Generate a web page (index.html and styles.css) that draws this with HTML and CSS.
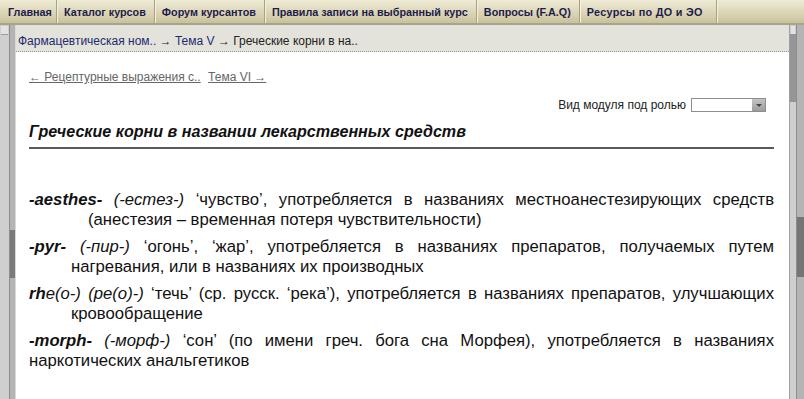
FILE: index.html
```html
<!DOCTYPE html>
<html lang="ru">
<head>
    <meta charset="UTF-8">
    <title>Греческие корни в названии лекарственных средств</title>
    <link rel="stylesheet" href="styles.css">
</head>
<body>
    <div class="topnav">
        <a class="tab" href="#">Главная</a>
        <a class="tab" href="#">Каталог курсов</a>
        <a class="tab" href="#">Форум курсантов</a>
        <a class="tab" href="#">Правила записи на выбранный курс</a>
        <a class="tab" href="#">Вопросы (F.A.Q)</a>
        <a class="tab" href="#">Ресурсы по ДО и ЭО</a>
    </div>

    <div class="frame">
        <div class="rail-left">
            <div class="track">
                <div class="arrow-up"></div>
            </div>
            <div class="track-dark">
                <div class="thumb-left"></div>
            </div>
        </div>

        <div class="main">
            <div class="breadcrumb">
                <a href="#">Фармацевтическая ном..</a> &rarr; <a href="#">Тема V</a> &rarr; Греческие корни в на..
            </div>

            <div class="content">
                <div class="pager">
                    <a href="#">&larr; Рецептурные выражения с..</a>
                    <a href="#">Тема VI &rarr;</a>
                </div>

                <div class="role-view">
                    Вид модуля под ролью
                    <span class="select"><span class="select-btn"></span></span>
                </div>

                <h2 class="title">Греческие корни в названии лекарственных средств</h2>

                <div class="text">
                    <p>
                        <span class="first"><b>-aesthes-</b> <i>(-естез-)</i> ‘чувство’, употребляется в названиях местноанестезирующих средств</span>
                        <span class="rest indent-wide">(анестезия – временная потеря чувствительности)</span>
                    </p>
                    <p>
                        <span class="first"><b>-pyr-</b> <i>(-пир-)</i> ‘огонь’, ‘жар’, употребляется в названиях препаратов, получаемых путем</span>
                        <span class="rest indent">нагревания, или в названиях их производных</span>
                    </p>
                    <p>
                        <span class="first"><b>rh</b><i>e(o-)</i> <i>(pe(o)-)</i> ‘течь’ (ср. русск. ‘река’), употребляется в названиях препаратов, улучшающих</span>
                        <span class="rest indent">кровообращение</span>
                    </p>
                    <p>
                        <span class="first"><b>-morph-</b> <i>(-морф-)</i> ‘сон’ (по имени греч. бога сна Морфея), употребляется в названиях</span>
                        <span class="rest">наркотических анальгетиков</span>
                    </p>
                </div>
            </div>
        </div>

        <div class="rail-right">
            <div class="track">
                <div class="arrow-up"></div>
                <div class="thumb-inner"></div>
            </div>
            <div class="track-dark">
                <div class="thumb-right"></div>
            </div>
        </div>
    </div>
</body>
</html>
```

FILE: styles.css
```css
html, body {
    margin: 0;
    padding: 0;
    height: 100%;
    overflow: hidden;
}

body {
    font-family: "Liberation Sans", Arial, sans-serif;
    background-color: #ffffff;
    display: flex;
    flex-direction: column;
}

.topnav {
    display: flex;
    height: 23px;
    background: linear-gradient(#efebd6, #d6cfae 70%, #c9c19b);
    border-bottom: 2px solid #a8a48c;
    flex-shrink: 0;
}

.tab {
    display: flex;
    align-items: center;
    padding: 0 8px 0 7px;
    font-size: 10.8px;
    font-weight: bold;
    color: #1c1c4c;
    text-decoration: none;
    border-right: 1px solid #a9a184;
    box-shadow: 1px 0 0 #f4f0e0;
}

.tab:first-child {
    padding-left: 8px;
    padding-right: 4px;
}

.tab:last-child {
    padding-right: 13px;
    letter-spacing: 0.3px;
}

.frame {
    flex: 1;
    display: flex;
    min-height: 0;
}

/* scrollbars of the frames */
.rail-left, .rail-right {
    display: flex;
    flex-shrink: 0;
}

.track {
    width: 9px;
    background-color: #cfcfcf;
    border-right: 1px solid #8c8c8c;
}

.track-dark {
    width: 5px;
    background-color: #b4b4b4;
    border-right: 1px solid #d8d8d8;
}

.rail-right .track {
    width: 6px;
    border-left: 1px solid #a0a0a0;
    border-right: 1px solid #8c8c8c;
}

.rail-right .track-dark {
    width: 7px;
    border-right: none;
}

.arrow-up {
    height: 8px;
    margin: 1px 1px 0 1px;
    background-color: #e2e2e2;
    border-bottom: 1px solid #9c9c9c;
}

.thumb-left {
    height: 48px;
    margin-top: 205px;
    background-color: #7a7a7a;
}

.thumb-inner {
    height: 68px;
    margin-top: -1px;
    background-color: #959595;
}

.thumb-right {
    height: 60px;
    margin-top: 192px;
    background-color: #757575;
}

.main {
    flex: 1;
    display: flex;
    flex-direction: column;
    min-width: 0;
}

.breadcrumb {
    height: 20px;
    padding-top: 6px;
    line-height: 20px;
    padding-left: 2px;
    font-size: 12px;
    color: #222222;
    background-color: #e3e3dc;
    border-bottom: 1px dotted #9a9a9a;
}

.breadcrumb a {
    color: #1f2a6e;
    text-decoration: none;
}

.content {
    flex: 1;
    padding: 0 15px 0 13px;
}

.pager {
    margin-top: 18px;
    font-size: 12px;
}

.pager a {
    color: #666666;
    margin-right: 4px;
}

.role-view {
    margin-top: 14px;
    display: flex;
    justify-content: flex-end;
    align-items: center;
    gap: 5px;
    font-size: 12px;
    color: #222222;
    margin-right: 8px;
}

.select {
    width: 73px;
    height: 12px;
    border: 1px solid #8e8e8e;
    background-color: #ffffff;
    display: flex;
    justify-content: flex-end;
}

.select-btn {
    width: 13px;
    background: linear-gradient(#c4c4c4, #9c9c9c);
    position: relative;
}

.select-btn::after {
    content: "";
    position: absolute;
    left: 4px;
    top: 5px;
    border-left: 3px solid transparent;
    border-right: 3px solid transparent;
    border-top: 3px solid #444444;
}

.title {
    margin: 10px 0 0 0;
    padding-bottom: 6px;
    font-size: 16.1px;
    font-style: italic;
    font-weight: bold;
    color: #111111;
    border-bottom: 2px solid #5a5a5a;
}

.text {
    margin-top: 41px;
    font-size: 16.7px;
    line-height: 19.5px;
    color: #111111;
}

.text p {
    margin: 0 0 8px 0;
}

.text b {
    font-style: italic;
}

.first {
    display: block;
    text-align: justify;
    text-align-last: justify;
}

.rest {
    display: block;
}

.indent-wide {
    padding-left: 59px;
}

.indent {
    padding-left: 42px;
}
```
